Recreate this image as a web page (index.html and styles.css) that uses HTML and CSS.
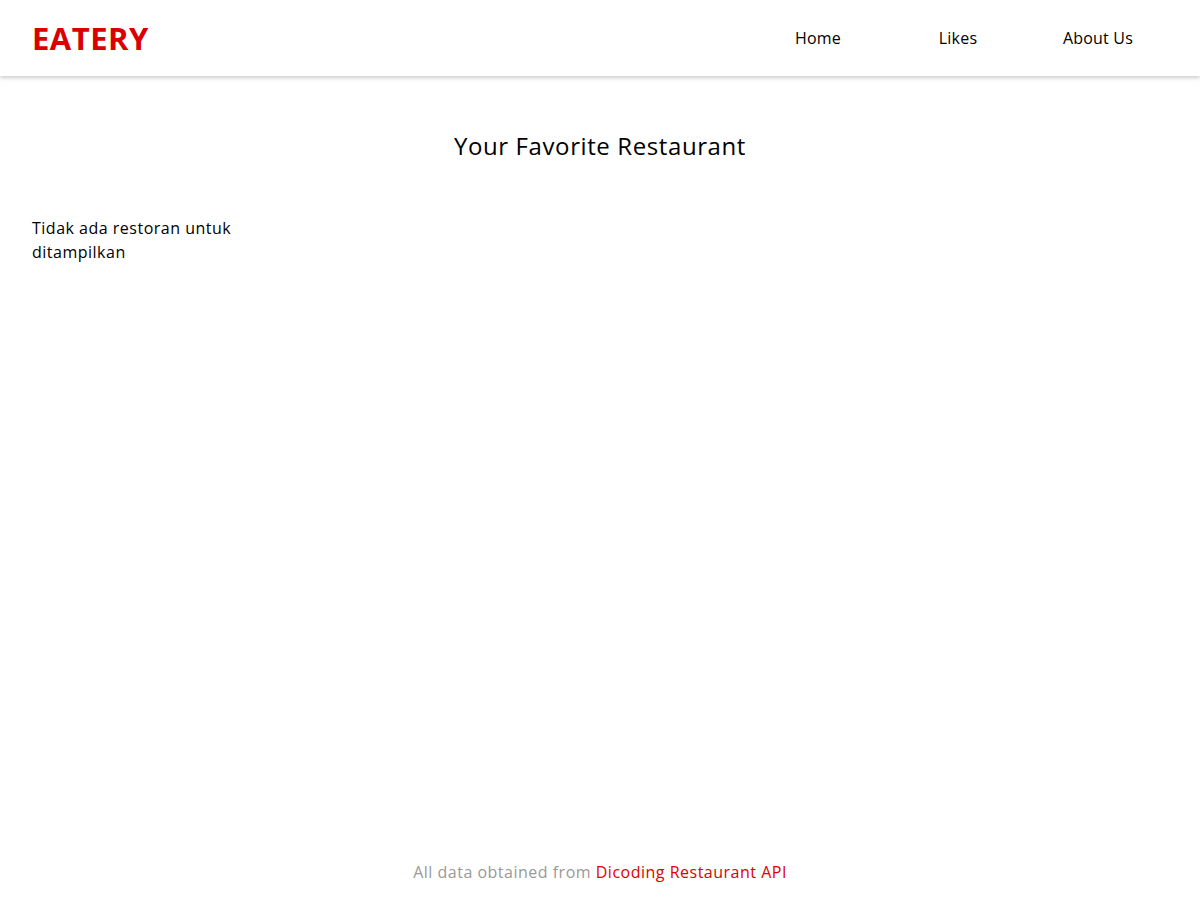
FILE: index.html
```html
<!DOCTYPE html>
<html lang="id">
<head>
<meta charset="utf-8">
<title>Eatery</title>
<link rel="stylesheet" href="styles.css">
</head>
<body>
<div class="page">
  <header class="app-bar">
    <a class="brand" href="#">EATERY</a>
    <nav class="nav">
      <a class="nav-item" href="#">Home</a>
      <a class="nav-item" href="#">Likes</a>
      <a class="nav-item" href="#">About Us</a>
    </nav>
  </header>
  <main class="content">
    <h2 class="content-heading">Your Favorite Restaurant</h2>
    <div class="restaurants">
      <div class="empty">Tidak ada restoran untuk ditampilkan</div>
    </div>
  </main>
  <footer class="footer">
    <p>All data obtained from <a href="#">Dicoding Restaurant API</a></p>
  </footer>
</div>
</body>
</html>
```
FILE: styles.css
```css
* { box-sizing: border-box; }
html, body { margin: 0; padding: 0; }
body {
  font-family: "Open Sans", "Noto Sans", sans-serif;
  color: #000;
  background: #fff;
}
a { text-decoration: none; color: inherit; }
.page {
  min-height: 900px;
  display: flex;
  flex-direction: column;
}
.app-bar {
  height: 76px;
  padding: 0 32px;
  display: flex;
  align-items: center;
  justify-content: space-between;
  box-shadow: 0 2px 4px rgba(0,0,0,0.2);
}
.brand {
  color: #db0000;
  font-size: 31px;
  font-weight: 700;
  letter-spacing: 0.5px;
}
.nav { display: flex; }
.nav-item {
  width: 140px;
  text-align: center;
  font-size: 16px;
  letter-spacing: 0.2px;
  color: #000;
}
.content {
  flex: 1;
  padding: 0 32px;
}
.content-heading {
  margin: 54px 0 0;
  text-align: center;
  font-size: 24px;
  font-weight: 400;
  line-height: 32px;
  letter-spacing: 0.6px;
}
.restaurants {
  margin-top: 54px;
  display: grid;
  grid-template-columns: repeat(4, 1fr);
  gap: 32px;
}
.empty {
  font-size: 16px;
  line-height: 24px;
  letter-spacing: 0.5px;
}
.footer {
  height: 60px;
  display: flex;
  align-items: flex-start;
  justify-content: center;
}
.footer p {
  margin: 20px 0 0;
  font-size: 16px;
  line-height: 24px;
  letter-spacing: 0.5px;
  color: #999;
}
.footer a { color: #e00000; }
```
